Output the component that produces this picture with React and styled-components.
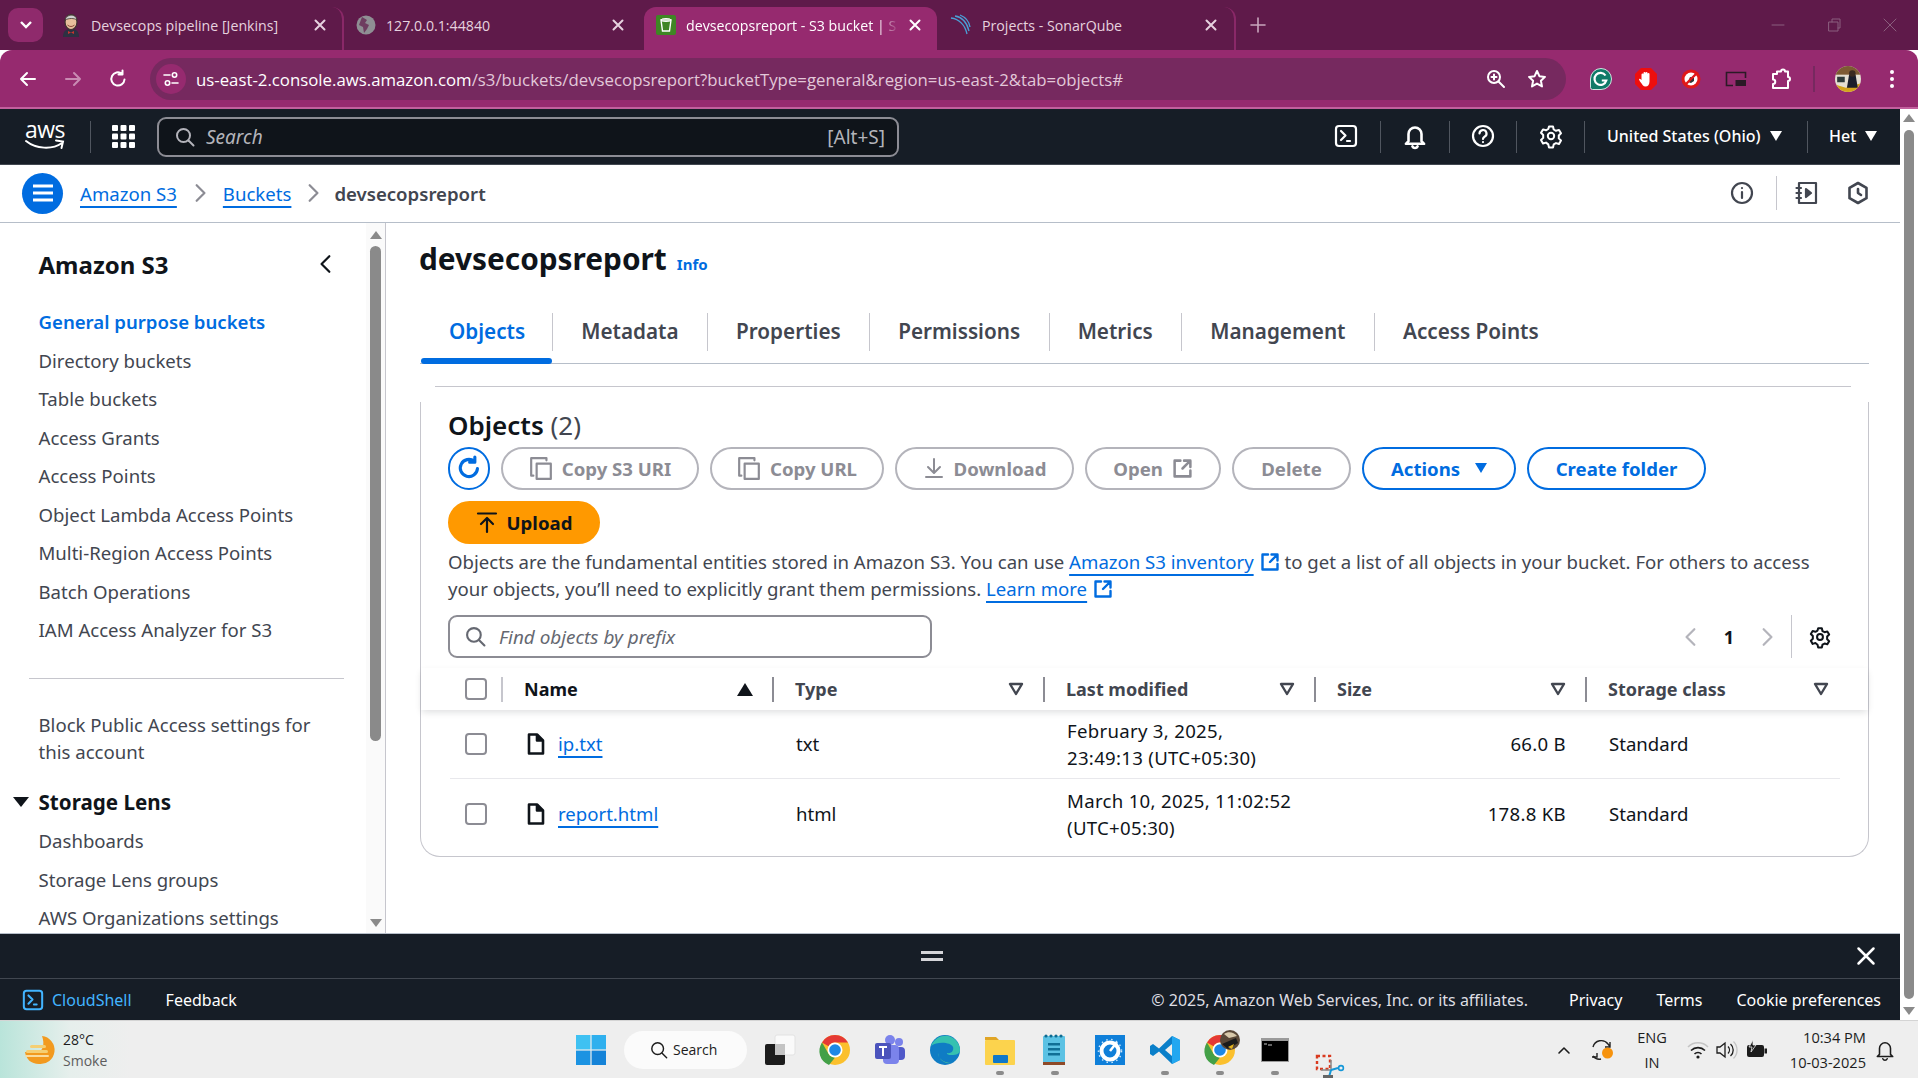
import React from "react";
import styled, { createGlobalStyle } from "styled-components";

const sans = `"Noto Sans", "Open Sans", sans-serif`;
const ui = `"Open Sans", "Noto Sans", sans-serif`;
const blue = "#006ce0";
const ink = "#0f141a";
const gray = "#424650";
const navy = "#161d26";

const Global = createGlobalStyle`
  html, body { margin: 0; padding: 0; background: #fff; overflow: hidden; }
  * { box-sizing: border-box; }
  svg { display: block; flex: none; overflow: visible; }
`;

const Root = styled.div`
  width: 1918px;
  height: 1078px;
  display: flex;
  flex-direction: column;
  overflow: hidden;
  font-family: ${sans};
  color: ${ink};
`;

/* browser chrome */
const TabStrip = styled.div`
  height: 50px;
  flex: none;
  background: #5f1a4a;
  display: flex;
  align-items: flex-end;
  padding-left: 8px;
  font-family: ${ui};
`;
const TabSearch = styled.div`
  width: 35px;
  height: 34px;
  margin: 0 7px 8px 0;
  border-radius: 10px;
  background: #8f2a6c;
  display: flex;
  align-items: center;
  justify-content: center;
`;
const Tab = styled.div`
  width: ${(p) => p.$w}px;
  height: 43px;
  padding: 0 ${(p) => p.$pr}px 7px ${(p) => p.$pl}px;
  display: flex;
  align-items: center;
  gap: 10px;
  border-radius: 12px 12px 0 0;
  background: ${(p) => (p.$active ? "#962a6f" : "transparent")};
  color: ${(p) => (p.$active ? "#fff" : "#e6d2df")};
  font-size: 14.2px;
  border-right: ${(p) => (p.$sep ? "2px solid #8a2868" : "none")};
`;
const TabTitle = styled.span`
  flex: 1;
  white-space: nowrap;
  mask-image: ${(p) => (p.$fade ? "linear-gradient(90deg, #000 90%, transparent)" : "none")};
`;
const NewTab = styled.div`
  width: 44px;
  height: 34px;
  margin-bottom: 8px;
  display: flex;
  align-items: center;
  justify-content: center;
  color: #c9a6bd;
`;
const WinControls = styled.div`
  margin-left: auto;
  height: 50px;
  display: flex;
  align-items: center;
  color: #8b5f7e;
`;
const WinBtn = styled.div`
  width: 56px;
  display: flex;
  justify-content: center;
`;
const Toolbar = styled.div`
  height: 59px;
  flex: none;
  background: #962a6f;
  border-bottom: 2px solid #c25f9d;
  display: flex;
  align-items: center;
  padding: 1px 0 0 5px;
  border-radius: 12px 12px 0 0;
  color: #fff;
`;
const ToolBtn = styled.div`
  width: ${(p) => p.$w || 45}px;
  height: 42px;
  display: flex;
  align-items: center;
  justify-content: center;
  color: ${(p) => (p.$dim ? "#c98bb3" : "#fff")};
`;
const Omnibox = styled.div`
  width: 1416px;
  height: 42px;
  margin: 0 12px 0 10px;
  padding: 0 0 0 6px;
  border-radius: 21px;
  background: #76295f;
  display: flex;
  align-items: center;
  font-family: ${ui};
`;
const SiteInfo = styled.div`
  width: 30px;
  height: 30px;
  border-radius: 50%;
  background: #962a6f;
  display: flex;
  align-items: center;
  justify-content: center;
`;
const Url = styled.div`
  margin-left: 10px;
  flex: 1;
  font-size: 16.8px;
  white-space: nowrap;
  color: #e2c8d9;
  b {
    font-weight: 400;
    color: #fff;
  }
`;
const ToolDivider = styled.div`
  width: 2px;
  height: 26px;
  background: #76295f;
`;

/* console shell */
const Shell = styled.div`
  flex: 1;
  min-height: 0;
  display: flex;
`;
const Page = styled.div`
  width: 1900px;
  display: flex;
  flex-direction: column;
`;
const PageScroll = styled.div`
  width: 18px;
  background: #fff;
  display: flex;
  flex-direction: column;
  align-items: center;
  padding: 5px 0;
  gap: 8px;
`;
const Thumb = styled.div`
  width: ${(p) => p.$w}px;
  flex: ${(p) => (p.$h ? "none" : "1")};
  height: ${(p) => (p.$h ? `${p.$h}px` : "auto")};
  border-radius: 6px;
  background: #8a8a8a;
`;
const ArrowUp = styled.div`
  width: 0;
  height: 0;
  flex: none;
  border-left: 6px solid transparent;
  border-right: 6px solid transparent;
  border-bottom: 8px solid #8a8a8a;
`;
const ArrowDown = styled(ArrowUp)`
  border-bottom: 0;
  border-top: 8px solid #8a8a8a;
`;
const TopNav = styled.div`
  height: 56px;
  flex: none;
  background: ${navy};
  border-bottom: 1px solid #414750;
  display: flex;
  align-items: center;
  color: #fff;
`;
const AwsLogo = styled.div`
  width: 44px;
  margin-left: 23px;
  display: flex;
  flex-direction: column;
  align-items: center;
  font: 500 23px/17px ${ui};
  letter-spacing: -0.5px;
`;
const NavDivider = styled.div`
  width: 1px;
  height: 32px;
  background: #50565f;
  margin-left: ${(p) => p.$ml || 0}px;
`;
const GridBtn = styled.div`
  margin-left: 21px;
  width: 23px;
`;
const SearchBox = styled.div`
  width: 742px;
  height: 40px;
  margin-left: 22px;
  padding: 0 12px 0 16px;
  display: flex;
  align-items: center;
  gap: 11px;
  border: 2px solid #8c8c94;
  border-radius: 9px;
  background: #0f141a;
  color: #b4b4bb;
  font-size: 19px;
  em {
    flex: 1;
    font-style: italic;
  }
`;
const NavRight = styled.div`
  margin-left: auto;
  display: flex;
  align-items: center;
`;
const NavCell = styled.div`
  width: ${(p) => p.$w}px;
  padding-left: ${(p) => p.$pl || 0}px;
  padding-bottom: 2px;
  display: flex;
  align-items: center;
  justify-content: ${(p) => (p.$pl ? "flex-start" : "center")};
  gap: 9px;
  font-size: 16px;
  font-weight: 500;
`;
const Caret = styled.span`
  width: 0;
  height: 0;
  border-left: 6px solid transparent;
  border-right: 6px solid transparent;
  border-top: 10px solid currentColor;
`;
const CrumbBar = styled.div`
  height: 58px;
  flex: none;
  border-bottom: 1px solid #b6bec9;
  display: flex;
  align-items: center;
  padding: 0 0 1px 22px;
`;
const MenuCircle = styled.div`
  width: 41px;
  height: 41px;
  margin-right: 17px;
  border-radius: 50%;
  background: ${blue};
  display: flex;
  align-items: center;
  justify-content: center;
`;
const Link = styled.a`
  color: ${blue};
  font-size: 18.6px;
  text-decoration: underline;
  text-underline-offset: 5px;
  text-decoration-thickness: 1.5px;
`;
const CrumbSep = styled.div`
  width: ${(p) => p.$w}px;
  display: flex;
  justify-content: center;
  color: #8c8c94;
`;
const CrumbNow = styled.span`
  font-size: 18.6px;
  font-weight: 600;
  color: ${gray};
`;
const CrumbRight = styled.div`
  margin-left: auto;
  padding-right: 21px;
  display: flex;
  align-items: center;
  color: ${gray};
`;
const IconCell = styled.div`
  width: ${(p) => p.$w}px;
  display: flex;
  justify-content: center;
`;
const CrumbDivider = styled.div`
  width: 1px;
  height: 34px;
  margin-left: 8px;
  background: #c6c6cd;
`;

/* body */
const Body = styled.div`
  flex: 1;
  min-height: 0;
  display: flex;
`;
const Sidebar = styled.aside`
  width: 386px;
  flex: none;
  display: flex;
  border-right: 1px solid #c6c6cd;
`;
const SideNav = styled.nav`
  flex: 1;
  min-width: 0;
  overflow: hidden;
  padding: 23px 0 0 38.5px;
  font-size: 18.6px;
  color: ${gray};
`;
const SideTitle = styled.div`
  height: 36px;
  display: flex;
  align-items: center;
  justify-content: space-between;
  padding-right: 30px;
  margin-bottom: 20.5px;
  font-size: 24px;
  font-weight: 700;
  color: ${ink};
`;
const SideItem = styled.div`
  height: 38.5px;
  display: flex;
  align-items: center;
  white-space: nowrap;
  font-weight: ${(p) => (p.$active ? 600 : 400)};
  color: ${(p) => (p.$active ? blue : gray)};
`;
const SideRule = styled.div`
  height: 1px;
  margin: 29px 22px 32px -10px;
  background: #c6c6cd;
`;
const SideWrap = styled.div`
  line-height: 27px;
  width: 290px;
  margin-bottom: 18px;
`;
const SideGroup = styled.div`
  position: relative;
  height: 38.5px;
  display: flex;
  align-items: center;
  font-size: 20.6px;
  font-weight: 700;
  color: ${ink};
`;
const GroupCaret = styled(Caret)`
  position: absolute;
  left: -26px;
  top: 14px;
  border-left-width: 8px;
  border-right-width: 8px;
`;
const SideScroll = styled.div`
  width: 19px;
  flex: none;
  background: #fafafa;
  display: flex;
  flex-direction: column;
  align-items: center;
  padding: 8px 0 6px;
  gap: 7px;
`;
const SideSpacer = styled.div`
  flex: 1;
`;
const Main = styled.main`
  flex: 1;
  min-width: 0;
  padding: 16px 31px 0 34px;
`;
const TitleRow = styled.div`
  height: 40px;
  display: flex;
  align-items: baseline;
  gap: 10px;
  margin-bottom: 34px;
`;
const Title = styled.h1`
  margin: 0 0 0 -1px;
  font-size: 29.8px;
  line-height: 40px;
  font-weight: 700;
`;
const InfoLink = styled.a`
  color: ${blue};
  font-size: 15px;
  font-weight: 700;
`;
const Tabs = styled.div`
  display: flex;
  padding: 0 0 12px 1px;
  border-bottom: 1px solid #b6bec9;
`;
const TabItem = styled.div`
  position: relative;
  height: 38px;
  padding: 0 ${(p) => (p.$last ? 0 : p.$active ? 27 : 28.5)}px 2px 28px;
  display: flex;
  align-items: center;
  font-size: 20.7px;
  font-weight: 600;
  color: ${(p) => (p.$active ? blue : gray)};
  border-right: ${(p) => (p.$last ? "none" : "1px solid #c6c6cd")};
  &::after {
    content: "";
    display: ${(p) => (p.$active ? "block" : "none")};
    position: absolute;
    left: 0;
    right: 0;
    bottom: -13px;
    height: 6px;
    border-radius: 3px;
    background: ${blue};
  }
`;
const TopRule = styled.div`
  height: 1px;
  margin: 22px 18px 15px 15px;
  background: #c6c6cd;
`;
const Card = styled.section`
  height: 455px;
  border: 1px solid #c6c6cd;
  border-top: 0;
  border-radius: 0 0 20px 20px;
`;
const CardHead = styled.div`
  padding: 6px 0 0 27px;
`;
const CardTitle = styled.div`
  height: 34px;
  line-height: 34px;
  font-size: 26px;
  font-weight: 600;
  span {
    font-weight: 400;
    color: ${gray};
  }
`;
const ActionRow = styled.div`
  display: flex;
  gap: 11px;
  margin-top: ${(p) => p.$mt}px;
`;
const Pill = styled.div`
  width: ${(p) => p.$w}px;
  height: 43px;
  padding-bottom: 1px;
  border-radius: 22px;
  display: flex;
  align-items: center;
  justify-content: center;
  gap: ${(p) => p.$gap || 9}px;
  font-size: 18.6px;
  font-weight: 700;
  white-space: nowrap;
  border: 2px solid ${(p) => ({ off: "#b4b4bb", on: blue, fill: "#ff9900" })[p.$kind]};
  color: ${(p) => ({ off: "#8c8c94", on: blue, fill: ink })[p.$kind]};
  background: ${(p) => (p.$kind === "fill" ? "#ff9900" : "#fff")};
`;
const Blurb = styled.p`
  margin: 4px 0 0;
  font-size: 18.6px;
  line-height: 27px;
  color: ${gray};
  white-space: nowrap;
`;
const ExtIcon = styled.span`
  display: inline-block;
  vertical-align: -3px;
  margin-left: 6px;
  color: ${blue};
`;
const FilterRow = styled.div`
  display: flex;
  align-items: center;
  margin-top: 13px;
  padding-right: 37px;
`;
const FilterBox = styled.div`
  width: 484px;
  height: 43px;
  padding: 0 15px;
  display: flex;
  align-items: center;
  gap: 13px;
  border: 2px solid #8c8c94;
  border-radius: 9px;
  font-size: 18.9px;
  font-style: italic;
  color: #656871;
`;
const Pager = styled.div`
  margin-left: auto;
  height: 43px;
  display: flex;
  align-items: center;
  color: #b4b4bb;
`;
const PagerNum = styled.span`
  width: 56px;
  text-align: center;
  font-size: 18px;
  font-weight: 700;
  color: ${ink};
`;
const PagerRule = styled.div`
  width: 1px;
  height: 43px;
  margin: 0 17px 0 14px;
  background: #c6c6cd;
`;
const HeadRow = styled.div`
  position: relative;
  height: 42px;
  margin-top: 10px;
  display: grid;
  grid-template-columns: 80px repeat(4, 271px) 254px;
  align-items: center;
  background: #fff;
  box-shadow: 0 3px 7px -1px rgba(15, 20, 26, 0.14);
`;
const CheckCell = styled.div`
  padding-left: ${(p) => p.$pl}px;
`;
const Check = styled.div`
  width: 22px;
  height: 22px;
  border: 2px solid #8c8c94;
  border-radius: 4px;
`;
const HeadCell = styled.div`
  height: 25px;
  padding: 0 ${(p) => p.$pr || 19}px 0 21px;
  display: flex;
  align-items: center;
  justify-content: space-between;
  border-left: 2px solid ${(p) => (p.$light ? "#c6c6cd" : "#8c8c94")};
  font-size: 18px;
  font-weight: 700;
  color: ${(p) => (p.$sorted ? ink : gray)};
`;
const Row = styled.div`
  height: ${(p) => p.$h}px;
  margin: 0 28px 0 29px;
  display: grid;
  grid-template-columns: 52px repeat(4, 271px) 253px;
  align-items: center;
  font-size: 18.6px;
  line-height: 27px;
  border-bottom: ${(p) => (p.$line ? "1px solid #e8e8ec" : "none")};
`;
const NameCell = styled.div`
  margin-top: -1px;
  padding-left: 25px;
  display: flex;
  align-items: center;
  gap: 13px;
`;
const TextCell = styled.div`
  margin-top: ${(p) => (p.$date ? 0 : -2)}px;
  padding-left: ${(p) => p.$pl || 23}px;
  text-align: ${(p) => (p.$right ? "right" : "left")};
  padding-right: ${(p) => (p.$right ? 20 : 0)}px;
  letter-spacing: ${(p) => (p.$date || p.$right ? "0.3px" : "0")};
  white-space: nowrap;
`;

/* drawer and footer */
const Drawer = styled.div`
  height: 46px;
  flex: none;
  background: ${navy};
  border-top: 1px solid #b6bec9;
  border-bottom: 1px solid #414750;
  padding: 0 24px 0 0;
  display: flex;
  align-items: center;
  color: #fff;
`;
const Grip = styled.div`
  width: 22px;
  height: 10px;
  margin: 0 auto 0 921px;
  border-top: 3px solid #d5d5d9;
  border-bottom: 3px solid #d5d5d9;
`;
const Footer = styled.footer`
  height: 41px;
  flex: none;
  background: ${navy};
  color: #fff;
  display: flex;
  align-items: center;
  padding: 0 19px 0 22px;
  font-size: 16px;
  white-space: nowrap;
`;
const ShellLink = styled.div`
  display: flex;
  align-items: center;
  gap: 8px;
  color: #42b4ff;
  margin-right: 34px;
`;
const Copyright = styled.span`
  margin-left: auto;
  margin-right: 41px;
  color: #dedee3;
`;
const FootLink = styled.span`
  margin-left: ${(p) => p.$ml || 0}px;
`;

/* taskbar */
const Taskbar = styled.div`
  height: 58px;
  flex: none;
  display: flex;
  align-items: center;
  background: linear-gradient(90deg, #b9e4da 0, #e6efec 70px, #eeeeee 130px);
  border-top: 1px solid #d4d4d4;
  font-family: ${ui};
  color: #1c1c1c;
`;
const Weather = styled.div`
  width: 550px;
  margin-left: 24px;
  display: flex;
  align-items: center;
  gap: 9px;
  font-size: 14px;
  line-height: 21px;
  span {
    display: block;
    color: #5d5d5d;
  }
`;
const TaskItem = styled.div`
  position: relative;
  width: ${(p) => p.$w || 55}px;
  height: 58px;
  display: flex;
  align-items: ${(p) => (p.$drop ? "flex-end" : "center")};
  justify-content: center;
  &::after {
    content: "";
    display: ${(p) => (p.$open ? "block" : "none")};
    position: absolute;
    left: 50%;
    bottom: 4px;
    width: 8px;
    height: 4px;
    margin-left: -4px;
    border-radius: 2px;
    background: #8b8b8b;
  }
`;
const TaskSearch = styled.div`
  width: 123px;
  height: 38px;
  margin: 0 5px 0 16px;
  padding-left: 26px;
  display: flex;
  align-items: center;
  gap: 5px;
  border-radius: 19px;
  background: #fbfbfb;
  font-size: 14px;
`;
const Tray = styled.div`
  margin-left: auto;
  height: 58px;
  display: flex;
  align-items: center;
  padding-right: 14px;
`;
const TrayBtn = styled(ToolBtn)`
  color: #1c1c1c;
`;
const TrayText = styled.div`
  width: ${(p) => p.$w}px;
  text-align: ${(p) => p.$align};
  font-size: 14.6px;
  line-height: 25px;
`;

/* drawings */
const Line = ({ s = 20, sw = 2, vb = 20, children }) => (
  <svg width={s} height={s} viewBox={`0 0 ${vb} ${vb}`} fill="none" stroke="currentColor" strokeWidth={sw} strokeLinecap="round" strokeLinejoin="round">
    {children}
  </svg>
);
const Close = ({ s = 12, sw = 2 }) => <Line s={s} vb={12} sw={sw}><path d="M1.5 1.5l9 9M10.5 1.5l-9 9" /></Line>;
const Chevron = ({ s = 20, left }) => <Line s={s} vb={18} sw={2}><path d={left ? "M12 2L5 9l7 7" : "M6 2l7 7-7 7"} /></Line>;
const Reload = ({ s = 20, sw = 2 }) => <Line s={s} sw={sw}><path d="M16.5 10.5A6.6 6.6 0 1 1 14 4.8M14.5 1.5v4h-4" /></Line>;
const gearPath = "M10 2.5h4l.7 3 2.3 1.3 3-.9 2 3.4-2.2 2.2v2.9l2.2 2.1-2 3.5-3-.9-2.3 1.3-.7 3h-4l-.7-3L7 18.6l-3 .9-2-3.5 2.2-2.1V11L2 8.8l2-3.4 3 .9 2.3-1.3z";
const Gear = ({ s = 24, sw = 2 }) => (
  <Line s={s} vb={24} sw={sw}>
    <circle cx="12" cy="12" r="3.2" />
    <path d={gearPath} />
  </Line>
);
const Magnifier = ({ s = 20, sw = 2 }) => <Line s={s} sw={sw}><circle cx="8.5" cy="8.5" r="6.5" /><path d="M13.5 13.5L18.5 18.5" /></Line>;
const CopyIcon = () => <Line s={24} vb={22}><path d="M4 18H2V2h14v2" /><path d="M7 7h13v14H7z" /></Line>;
const Ext = ({ s = 21 }) => <Line s={s} sw={2.4}><path d="M8 2.5H2.5v15h15V12M11.5 2.5h6v6M17 3l-7 7" /></Line>;
const FileIcon = () => (
  <svg width="18" height="22" viewBox="0 0 18 22" fill="none" stroke={ink} strokeWidth="2.6" strokeLinejoin="round"><path d="M2 1.5h8l6 6v13H2z" /><path d="M10 1.5v6h6" fill={ink} /></svg>
);
const SortDown = () => (
  <svg width="16" height="14" viewBox="0 0 16 14" fill="none" stroke={gray} strokeWidth="2.4" strokeLinejoin="round"><path d="M2 2h12L8 12z" /></svg>
);
const SortUp = () => <svg width="16" height="13" viewBox="0 0 16 13" fill={ink}><path d="M8 0l8 13H0z" /></svg>;
const ConsoleIcon = ({ s = 24, color = "currentColor" }) => (
  <svg width={s} height={s} viewBox="0 0 24 24" fill="none" stroke={color} strokeWidth="2.2" strokeLinecap="round" strokeLinejoin="round"><rect x="2" y="2" width="20" height="20" rx="3" /><path d="M7 7l4.5 4.5L7 16M13 17h3" /></svg>
);
const Smile = () => (
  <svg width="42" height="14" viewBox="0 0 42 14" fill="none" stroke="#fff" strokeWidth="2" strokeLinecap="round"><path d="M2 3c10 8 26 9 36 2M32 2.5l7 1-1.5 6.5" /></svg>
);
const GridDots = () => (
  <svg width="23" height="23" viewBox="0 0 23 23" fill="#fff">
    {[0, 8.5, 17].flatMap((y) => [0, 8.5, 17].map((x) => <rect key={`${x}-${y}`} x={x} y={y} width="6" height="6" rx="1" />))}
  </svg>
);
const MenuLines = () => (
  <svg width="20" height="18" viewBox="0 0 20 18" fill="none" stroke="#fff" strokeWidth="3"><path d="M0 2h20M0 9h20M0 16h20" /></svg>
);
const Jenkins = () => (
  <svg width="20" height="24" viewBox="0 0 20 24"><path d="M2 24c0-6 3-8 8-8s8 2 8 8z" fill="#2d3142" /><ellipse cx="10" cy="9" rx="6" ry="7.5" fill="#e8bf9c" stroke="#3d332f" strokeWidth="1.2" /><path d="M4 7c1-6 11-7 12 0-3-2-8-2-12 0z" fill="#cfcfcf" stroke="#3d332f" strokeWidth=".8" /><path d="M6.500 12c2 2 5 2 7 0" fill="none" stroke="#8d4a3a" /><path d="M7 18l3 1.500 3-1.500v3l-3-1.500-3 1.500z" fill="#c9342f" /></svg>
);
const Globe = () => (
  <svg width="20" height="20" viewBox="0 0 20 20"><circle cx="10" cy="10" r="9.5" fill="#8f8f94" /><path d="M6 2l5 3-2 3 4 2-2 4-3 4-1-6-4-2z" fill="#5f1a4a" opacity=".7" /></svg>
);
const S3Favicon = () => (
  <svg width="20" height="20" viewBox="0 0 20 20"><rect width="20" height="20" rx="2" fill="#3f8624" /><path d="M5 5h10l-1.5 11h-7z" fill="none" stroke="#fff" strokeWidth="1.4" /><ellipse cx="10" cy="5" rx="5" ry="1.5" fill="none" stroke="#fff" /></svg>
);
const Sonar = () => (
  <svg width="22" height="20" viewBox="0 0 22 20" fill="none" stroke="#4b9fd5" strokeWidth="1.3"><path d="M1 3c8 1 14 7 16 16M5 1c7 1 12 7 14 15M10 0c5 2 9 6 10 12" /></svg>
);
const Grammarly = () => (
  <svg width="24" height="24" viewBox="0 0 24 24"><path d="M12 1.5a10.5 10.5 0 0 1 0 21H3.5a2 2 0 0 1-2-2V12A10.5 10.5 0 0 1 12 1.5z" fill="#0f7a68" stroke="#cfe6e0" /><path d="M16.5 8.5a6 6 0 1 0 .8 5h-4.5" fill="none" stroke="#fff" strokeWidth="2.2" /></svg>
);
const HandStop = () => (
  <svg width="24" height="24" viewBox="0 0 24 24"><path d="M7 1h10l6 6v10l-6 6H7l-6-6V7z" fill="#ee0e0e" /><path d="M7.5 13V7.5a1 1 0 0 1 2 0V6a1 1 0 0 1 2 0 1 1 0 0 1 2 0v1a1 1 0 0 1 2 0v7.5c0 3-1.5 5-4 5s-3-2-5.5-5l-1-2c0-1 1-1 2.5.5z" fill="#fff" /></svg>
);
const NoBlock = () => (
  <svg width="20" height="20" viewBox="0 0 20 20"><circle cx="10" cy="10" r="9.5" fill="#e01818" /><circle cx="10" cy="10" r="6.5" fill="#fff" /><path d="M7 13l2-5 4 1 0 3-3 2z" fill="#333" /><path d="M5 15L15 5" stroke="#e01818" strokeWidth="2.4" /></svg>
);
const Pip = () => (
  <svg width="22" height="16" viewBox="0 0 22 16" fill="none"><path d="M8 14.5H1.5v-13h19V7" stroke="#2b1a26" strokeWidth="1.6" /><rect x="10.5" y="9" width="10.5" height="6" fill="#2b1a26" /></svg>
);
const Puzzle = () => (
  <svg width="22" height="22" viewBox="0 0 22 22" fill="none" stroke="#fff" strokeWidth="2" strokeLinejoin="round"><path d="M7 3.5h4a2 2 0 0 1 4 0h3v5.5a2 2 0 0 1 0 4v7H3v-4a2.2 2.2 0 0 0 0-4.5V6h4z" /></svg>
);
const Avatar = ({ s = 26 }) => (
  <svg width={s} height={s} viewBox="0 0 24 24"><defs><clipPath id="av"><circle cx="12" cy="12" r="12" /></clipPath></defs><g clipPath="url(#av)"><rect width="24" height="24" fill="#e5dfd2" /><rect width="24" height="8" fill="#7d5a33" /><path d="M0 17l10 3 14-4v8H0z" fill="#d3a41c" /><path d="M13 8h6l2 12h-10z" fill="#1b1e2b" /><circle cx="16" cy="7" r="3" fill="#3a2a20" /><path d="M2 10h7v5H2z" fill="#2e3a3a" /></g></svg>
);
const WeatherIcon = () => (
  <svg width="30" height="30" viewBox="0 0 30 30"><path d="M18 1a14 14 0 0 1-3 28C7 29 2 24 1 17h12c6 0 8-8 5-16z" fill="#f29a1f" /><g fill="#f5cf73"><rect x="6" y="10" width="16" height="3" rx="1.5" /><rect x="2" y="15" width="22" height="3" rx="1.5" /><rect x="1" y="20" width="24" height="2" rx="1" fill="#f9dc9f" /></g></svg>
);
const StartIcon = () => (
  <svg width="30" height="30" viewBox="0 0 30 30"><rect width="14.4" height="14.4" fill="#3fc1f2" /><rect x="15.6" width="14.4" height="14.4" fill="#2fb0ee" /><rect y="15.6" width="14.4" height="14.4" fill="#1c93e2" /><rect x="15.6" y="15.6" width="14.4" height="14.4" fill="#1583d8" /></svg>
);
const TaskView = () => (
  <svg width="30" height="30" viewBox="0 0 30 30"><rect x="10" y="0" width="20" height="20" rx="2" fill="#fafafa" stroke="#e2e2e2" /><rect x="0" y="9" width="20" height="21" rx="2" fill="#1c1c1c" /><rect x="10" y="9" width="10" height="11" fill="#c4c4c4" /></svg>
);
const ChromeIcon = ({ s = 30 }) => (
  <svg width={s} height={s} viewBox="0 0 30 30"><circle cx="15" cy="15" r="15" fill="#fbc02d" /><path d="M15 0a15 15 0 0 1 13 7.5H15a7.5 7.5 0 0 0-6.5 3.75L2 7.5A15 15 0 0 1 15 0z" fill="#e53935" /><path d="M2 7.5l6.5 11.25A7.5 7.5 0 0 0 15 22.5L9 30A15 15 0 0 1 2 7.5z" fill="#43a047" /><circle cx="15" cy="15" r="7.5" fill="#fff" /><circle cx="15" cy="15" r="5.8" fill="#1e88e5" /></svg>
);
const Teams = () => (
  <svg width="30" height="30" viewBox="0 0 30 30"><circle cx="24" cy="7" r="4" fill="#7b83eb" /><rect x="19" y="12" width="11" height="13" rx="4" fill="#5059c9" /><circle cx="15" cy="5" r="5" fill="#7b83eb" /><rect x="8" y="10" width="16" height="19" rx="4" fill="#7b83eb" /><rect x="0" y="8" width="16" height="16" rx="2" fill="#4b53bc" /><path d="M4 12h8M8 12v9" stroke="#fff" strokeWidth="2" /></svg>
);
const Edge = () => (
  <svg width="30" height="30" viewBox="0 0 30 30"><circle cx="15" cy="15" r="15" fill="#0f7cc4" /><path d="M1 11C4 3 12 0 18 1c6 1 12 7 12 14 0 4-4 5-8 5-2 0-5 0-5-2 5 1 7-3 6-6-2-5-16-6-22-1z" fill="#35c1b0" /><path d="M8 18c0 6 6 11 13 10-8 0-14-6-13-10z" fill="#5ad08f" /></svg>
);
const Folder = () => (
  <svg width="30" height="30" viewBox="0 0 30 30"><path d="M0 2h11l3 3h-14z" fill="#e0a526" /><rect y="5" width="30" height="25" rx="1" fill="#fcd34d" /><rect x="8" y="20" width="15" height="8" rx="1" fill="#0f78c9" /></svg>
);
const Notepad = () => (
  <svg width="24" height="32" viewBox="0 0 24 32"><rect y="2" width="22" height="27" rx="1" fill="#5cc2e4" /><rect y="28" width="22" height="3" fill="#8f4a28" /><g fill="#106f96"><rect x="5" y="9" width="12" height="2.5" /><rect x="5" y="14" width="12" height="2.5" /><rect x="5" y="19" width="12" height="2.5" /></g><g fill="#0f6b91"><circle cx="3" cy="2" r="1.6" /><circle cx="8" cy="2" r="1.6" /><circle cx="13" cy="2" r="1.6" /><circle cx="18" cy="2" r="1.6" /></g></svg>
);
const Speed = () => (
  <svg width="30" height="30" viewBox="0 0 30 30"><rect width="30" height="30" fill="#0f7fd9" /><circle cx="15" cy="16" r="8.5" fill="none" stroke="#fff" strokeWidth="4" /><path d="M15 16l7-9" stroke="#fff" strokeWidth="2.5" /><circle cx="15" cy="16" r="11.5" fill="none" stroke="#cfe8fb" strokeWidth="1.5" strokeDasharray="1.5 3.5" /></svg>
);
const VsCode = () => (
  <svg width="30" height="30" viewBox="0 0 30 30"><path d="M22 1l8 4v20l-8 4-13-12.5L3 21l-3-2v-8l3-2 6 4.500z" fill="#0a7fc9" /><path d="M22 1l8 4v20l-8 4z" fill="#22a7f0" /><path d="M22 9l-7 6 7 6z" fill="#eeeeee" /></svg>
);
const ChromeBird = () => (
  <svg width="40" height="36" viewBox="0 0 40 36"><g transform="translate(5 3)"><ChromeIcon s={30} /></g><circle cx="30" cy="8" r="10" fill="#5a4838" /><path d="M22 12l14-6 2 5-10 6z" fill="#1a1a1a" /><path d="M28 15l6-3-2 5z" fill="#e3b21c" /><path d="M24 2c4-3 10-2 13 2l-8 2z" fill="#d8c8aa" /></svg>
);
const Terminal = () => (
  <svg width="28" height="24" viewBox="0 0 28 24"><rect width="28" height="24" fill="#9a9a9a" /><rect x="1" y="3" width="26" height="20" fill="#000" /><path d="M3 6h3M7 7h4" stroke="#c8c8c8" /></svg>
);
const Snip = () => (
  <svg width="28" height="24" viewBox="0 0 28 24"><rect x="1" y="1" width="13" height="13" fill="none" stroke="#d93a1f" strokeWidth="2.4" strokeDasharray="3 2.500" /><path d="M15 5v10H5" fill="none" stroke="#8a8a8a" strokeWidth="1.5" /><path d="M15 15l7-2M15 15l-2 7" stroke="#1597d8" strokeWidth="2" /><circle cx="25" cy="13" r="2.400" fill="none" stroke="#1597d8" strokeWidth="1.600" /><rect x="7" y="20" width="10" height="3" fill="#666" /></svg>
);
const SyncDot = () => (
  <svg width="24" height="24" viewBox="0 0 24 24" fill="none" stroke="#222" strokeWidth="1.4"><path d="M2 9a8.500 8.500 0 0 1 15-3l2 2.500M19 4v5h-5M1 19h5v-4" /><path d="M2 18a8 8 0 0 0 8 3" /><circle cx="16.500" cy="15" r="5.500" fill="#f7930e" stroke="none" /></svg>
);
const Wifi = () => (
  <svg width="22" height="20" viewBox="0 0 22 20" fill="none" strokeWidth="1.6"><path d="M1 7a14 14 0 0 1 20 0" stroke="#c4c4c4" /><path d="M4 10.500a10 10 0 0 1 14 0M7.500 14a5 5 0 0 1 7 0" stroke="#1c1c1c" /><circle cx="11" cy="17" r="1.600" fill="#1c1c1c" /></svg>
);
const Volume = () => (
  <svg width="22" height="20" viewBox="0 0 22 20" fill="none" stroke="#1c1c1c" strokeWidth="1.3"><path d="M1 7h3l5-4v14l-5-4H1z" /><path d="M12 6.500a5 5 0 0 1 0 7M14.500 4a8 8 0 0 1 0 12" /><path d="M17.500 1.500a12 12 0 0 1 0 17" stroke="#c4c4c4" /></svg>
);
const Battery = () => (
  <svg width="22" height="20" viewBox="0 0 22 20"><rect x="1" y="5" width="17" height="12" rx="2" fill="#1c1c1c" /><rect x="18.500" y="8.500" width="2.500" height="5" fill="#1c1c1c" /><path d="M7 0L3 7h3l-1 5 5-7H7z" fill="#1c1c1c" stroke="#eee" strokeWidth=".8" /></svg>
);
const Bell = ({ s = 20, sw = 1.4 }) => (
  <Line s={s} sw={sw}><path d="M5 14V8.500a5 5 0 0 1 10 0V14l2 2H3zM8 18a2.200 2.200 0 0 0 4 0" /></Line>
);

const sideItems = ["Directory buckets", "Table buckets", "Access Grants", "Access Points", "Object Lambda Access Points", "Multi-Region Access Points", "Batch Operations", "IAM Access Analyzer for S3"];
const detailTabs = ["Metadata", "Properties", "Permissions", "Metrics", "Management"];
const columns = ["Type", "Last modified", "Size"];

export default function App() {
  return (
    <Root>
      <Global />
      <TabStrip>
        <TabSearch><svg width="14" height="10" viewBox="0 0 14 10" fill="none" stroke="#fff" strokeWidth="2.400"><path d="M2 2l5 5 5-5" /></svg></TabSearch>
        <Tab $w={294} $pl={11} $pr={16} $sep><Jenkins /><TabTitle>Devsecops pipeline [Jenkins]</TabTitle><Close /></Tab>
        <Tab $w={300} $pl={12} $pr={20}><Globe /><TabTitle>127.0.0.1:44840</TabTitle><Close /></Tab>
        <Tab $w={293} $pl={12} $pr={16} $active><S3Favicon /><TabTitle $fade>devsecopsreport - S3 bucket | S</TabTitle><Close /></Tab>
        <Tab $w={299} $pl={13} $pr={17} $sep><Sonar /><TabTitle>Projects - SonarQube</TabTitle><Close /></Tab>
        <NewTab><Line s={16} vb={16} sw={1.600}><path d="M8 1v14M1 8h14" /></Line></NewTab>
        <WinControls>
          <WinBtn><Line s={16} vb={16} sw={1}><path d="M2 8h12" /></Line></WinBtn>
          <WinBtn><Line s={16} vb={16} sw={1}><path d="M3 5h9v9H3zM6 5V2h8v9h-2" /></Line></WinBtn>
          <WinBtn><Line s={16} vb={16} sw={1}><path d="M2 2l12 12M14 2L2 14" /></Line></WinBtn>
        </WinControls>
      </TabStrip>
      <Toolbar>
        <ToolBtn><Line><path d="M17 10H3M9 4l-6 6 6 6" /></Line></ToolBtn>
        <ToolBtn $dim><Line><path d="M3 10h14M11 4l6 6-6 6" /></Line></ToolBtn>
        <ToolBtn><Reload /></ToolBtn>
        <Omnibox>
          <SiteInfo><Line s={18} vb={18} sw={1.600}><path d="M2 5h6M10 13h6" /><circle cx="12.500" cy="5" r="2.200" /><circle cx="5.500" cy="13" r="2.200" /></Line></SiteInfo>
          <Url><b>us-east-2.console.aws.amazon.com</b>/s3/buckets/devsecopsreport?bucketType=general&amp;region=us-east-2&amp;tab=objects#</Url>
          <ToolBtn $w={40}><Line><circle cx="8" cy="8" r="6" /><path d="M12.500 12.500L18 18M5.500 8h5M8 5.500v5" /></Line></ToolBtn>
          <ToolBtn $w={42}><Line><path d="M10 2l2.400 5.200 5.600.7-4.100 3.900 1.100 5.600-5-2.800-5 2.800 1.100-5.600L2 7.900l5.600-.7z" /></Line></ToolBtn>
          <ToolBtn $w={8} />
        </Omnibox>
        <ToolBtn><Grammarly /></ToolBtn>
        <ToolBtn><HandStop /></ToolBtn>
        <ToolBtn><NoBlock /></ToolBtn>
        <ToolBtn><Pip /></ToolBtn>
        <ToolBtn><Puzzle /></ToolBtn>
        <ToolBtn $w={22}><ToolDivider /></ToolBtn>
        <ToolBtn><Avatar /></ToolBtn>
        <ToolBtn $w={44}><svg width="6" height="20" viewBox="0 0 6 20" fill="#fff"><circle cx="3" cy="3" r="2" /><circle cx="3" cy="10" r="2" /><circle cx="3" cy="17" r="2" /></svg></ToolBtn>
      </Toolbar>
      <Shell>
        <Page>
          <TopNav>
            <AwsLogo>aws<Smile /></AwsLogo>
            <NavDivider $ml={23} />
            <GridBtn><GridDots /></GridBtn>
            <SearchBox><Magnifier /><em>Search</em>[Alt+S]</SearchBox>
            <NavRight>
              <NavCell $w={68}><ConsoleIcon /></NavCell>
              <NavDivider />
              <NavCell $w={68}><Bell s={26} sw={2} /></NavCell>
              <NavDivider />
              <NavCell $w={66}><Line s={24} vb={24} sw={2.200}><circle cx="12" cy="12" r="10" /><path d="M8.500 9.500a3.500 3.500 0 1 1 5 3.200c-1 .6-1.500 1-1.500 2.300M12 18v.1" /></Line></NavCell>
              <NavDivider />
              <NavCell $w={67}><Gear /></NavCell>
              <NavDivider />
              <NavCell $w={222} $pl={22}>United States (Ohio)<Caret /></NavCell>
              <NavDivider />
              <NavCell $w={92} $pl={21}>Het<Caret /></NavCell>
            </NavRight>
          </TopNav>
          <CrumbBar>
            <MenuCircle><MenuLines /></MenuCircle>
            <Link>Amazon S3</Link>
            <CrumbSep $w={46}><Chevron /></CrumbSep>
            <Link>Buckets</Link>
            <CrumbSep $w={43}><Chevron /></CrumbSep>
            <CrumbNow>devsecopsreport</CrumbNow>
            <CrumbRight>
              <IconCell $w={52}><Line s={24} vb={24} sw={2.200}><circle cx="12" cy="12" r="10" /><path d="M12 11v6M12 7v.1" /></Line></IconCell>
              <CrumbDivider />
              <IconCell $w={60}><Line s={24} vb={24} sw={2.200}><path d="M4 2h17v20H4zM1.500 7H6M1.500 12H6M1.500 17H6" /><path d="M11 8l5 4-5 4z" fill="currentColor" /></Line></IconCell>
              <IconCell $w={42}><Line s={24} vb={24} sw={2.600}><path d="M12 2l8.500 4.800v10.400L12 22l-8.500-4.800V6.800z" /><path d="M12 8v4l3 2" /></Line></IconCell>
            </CrumbRight>
          </CrumbBar>
          <Body>
            <Sidebar>
              <SideNav>
                <SideTitle>Amazon S3<Chevron left /></SideTitle>
                <SideItem $active>General purpose buckets</SideItem>
                {sideItems.map((item) => <SideItem key={item}>{item}</SideItem>)}
                <SideRule />
                <SideWrap>Block Public Access settings for this account</SideWrap>
                <SideGroup><GroupCaret />Storage Lens</SideGroup>
                <SideItem>Dashboards</SideItem>
                <SideItem>Storage Lens groups</SideItem>
                <SideItem>AWS Organizations settings</SideItem>
              </SideNav>
              <SideScroll>
                <ArrowUp />
                <Thumb $w={11} $h={495} />
                <SideSpacer />
                <ArrowDown />
              </SideScroll>
            </Sidebar>
            <Main>
              <TitleRow>
                <Title>devsecopsreport</Title>
                <InfoLink>Info</InfoLink>
              </TitleRow>
              <Tabs>
                <TabItem $active>Objects</TabItem>
                {detailTabs.map((tab) => <TabItem key={tab}>{tab}</TabItem>)}
                <TabItem $last>Access Points</TabItem>
              </Tabs>
              <TopRule />
              <Card>
                <CardHead>
                  <CardTitle>Objects <span>(2)</span></CardTitle>
                  <ActionRow $mt={5}>
                    <Pill $w={42} $kind="on"><Reload s={26} sw={2.400} /></Pill>
                    <Pill $w={198} $kind="off"><CopyIcon />Copy S3 URI</Pill>
                    <Pill $w={174} $kind="off"><CopyIcon />Copy URL</Pill>
                    <Pill $w={179} $kind="off"><Line s={22} vb={22}><path d="M11 2v13M5 10l6 6 6-6M3 20h16" /></Line>Download</Pill>
                    <Pill $w={136} $kind="off">Open<Ext /></Pill>
                    <Pill $w={119} $kind="off">Delete</Pill>
                    <Pill $w={154} $kind="on" $gap={15}>Actions<Caret /></Pill>
                    <Pill $w={179} $kind="on">Create folder</Pill>
                  </ActionRow>
                  <ActionRow $mt={11}>
                    <Pill $w={152} $kind="fill"><Line s={22} vb={22} sw={2.200}><path d="M2 2.500h18M11 21V8M5 13l6-6 6 6" /></Line>Upload</Pill>
                  </ActionRow>
                  <Blurb>
                    Objects are the fundamental entities stored in Amazon S3. You can use <Link>Amazon S3 inventory</Link><ExtIcon><Ext s={20} /></ExtIcon> to get a list of all objects in your bucket. For others to access
                    <br />
                    your objects, you’ll need to explicitly grant them permissions. <Link>Learn more</Link><ExtIcon><Ext s={20} /></ExtIcon>
                  </Blurb>
                  <FilterRow>
                    <FilterBox><Magnifier s={21} />Find objects by prefix</FilterBox>
                    <Pager>
                      <Chevron left />
                      <PagerNum>1</PagerNum>
                      <Chevron />
                      <PagerRule />
                      <IconCell $w={22}><svg width="22" height="22" viewBox="0 0 24 24" fill="none" stroke={ink} strokeWidth="2.200" strokeLinejoin="round"><circle cx="12" cy="12" r="3.200" /><path d={gearPath} /></svg></IconCell>
                    </Pager>
                  </FilterRow>
                </CardHead>
                <HeadRow>
                  <CheckCell $pl={44}><Check /></CheckCell>
                  <HeadCell $light $sorted>Name<SortUp /></HeadCell>
                  {columns.map((col) => <HeadCell key={col}>{col}<SortDown /></HeadCell>)}
                  <HeadCell $pr={10}>Storage class<SortDown /></HeadCell>
                </HeadRow>
                <Row $h={69} $line>
                  <CheckCell $pl={15}><Check /></CheckCell>
                  <NameCell><FileIcon /><Link>ip.txt</Link></NameCell>
                  <TextCell>txt</TextCell>
                  <TextCell $date>February 3, 2025,<br />23:49:13 (UTC+05:30)</TextCell>
                  <TextCell $right>66.0 B</TextCell>
                  <TextCell>Standard</TextCell>
                </Row>
                <Row $h={70}>
                  <CheckCell $pl={15}><Check /></CheckCell>
                  <NameCell><FileIcon /><Link>report.html</Link></NameCell>
                  <TextCell>html</TextCell>
                  <TextCell $date>March 10, 2025, 11:02:52<br />(UTC+05:30)</TextCell>
                  <TextCell $right>178.8 KB</TextCell>
                  <TextCell>Standard</TextCell>
                </Row>
              </Card>
            </Main>
          </Body>
          <Drawer><Grip /><Close s={20} sw={1.500} /></Drawer>
          <Footer>
            <ShellLink><ConsoleIcon s={22} color="#42b4ff" />CloudShell</ShellLink>
            <span>Feedback</span>
            <Copyright>© 2025, Amazon Web Services, Inc. or its affiliates.</Copyright>
            <FootLink>Privacy</FootLink>
            <FootLink $ml={34}>Terms</FootLink>
            <FootLink $ml={34}>Cookie preferences</FootLink>
          </Footer>
        </Page>
        <PageScroll>
          <ArrowUp />
          <Thumb $w={10} />
          <ArrowDown />
        </PageScroll>
      </Shell>
      <Taskbar>
        <Weather>
          <WeatherIcon />
          <div>28°C<span>Smoke</span></div>
        </Weather>
        <TaskItem $w={34}><StartIcon /></TaskItem>
        <TaskSearch><Magnifier s={18} sw={1.600} />Search</TaskSearch>
        <TaskItem><TaskView /></TaskItem>
        <TaskItem><ChromeIcon /></TaskItem>
        <TaskItem><Teams /></TaskItem>
        <TaskItem><Edge /></TaskItem>
        <TaskItem $open><Folder /></TaskItem>
        <TaskItem $open><Notepad /></TaskItem>
        <TaskItem><Speed /></TaskItem>
        <TaskItem $open><VsCode /></TaskItem>
        <TaskItem $open><ChromeBird /></TaskItem>
        <TaskItem $open><Terminal /></TaskItem>
        <TaskItem $drop><Snip /></TaskItem>
        <Tray>
          <TrayBtn $w={44}><Line s={14} vb={14} sw={1.600}><path d="M2 10l5-5 5 5" /></Line></TrayBtn>
          <TrayBtn $w={34}><SyncDot /></TrayBtn>
          <TrayText $w={64} $align="center">ENG<br />IN</TrayText>
          <TrayBtn $w={28}><Wifi /></TrayBtn>
          <TrayBtn $w={30}><Volume /></TrayBtn>
          <TrayBtn $w={30}><Battery /></TrayBtn>
          <TrayText $w={94} $align="right">10:34 PM<br />10-03-2025</TrayText>
          <TrayBtn $w={38}><Bell s={22} /></TrayBtn>
        </Tray>
      </Taskbar>
    </Root>
  );
}
